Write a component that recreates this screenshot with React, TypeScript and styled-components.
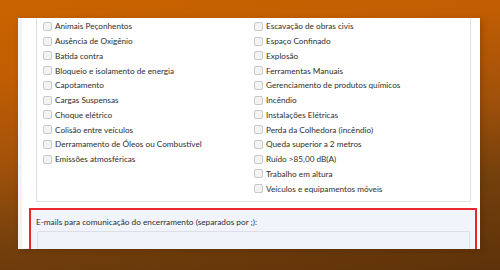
import styled, { createGlobalStyle } from "styled-components";

const leftRisks = [
    "Animais Peçonhentos",
    "Ausência de Oxigênio",
    "Batida contra",
    "Bloqueio e isolamento de energia",
    "Capotamento",
    "Cargas Suspensas",
    "Choque elétrico",
    "Colisão entre veículos",
    "Derramamento de Óleos ou Combustível",
    "Emissões atmosféricas",
];

const rightRisks = [
    "Escavação de obras civis",
    "Espaço Confinado",
    "Explosão",
    "Ferramentas Manuais",
    "Gerenciamento de produtos químicos",
    "Incêndio",
    "Instalações Elétricas",
    "Perda da Colhedora (incêndio)",
    "Queda superior a 2 metros",
    "Ruído >85,00 dB(A)",
    "Trabalho em altura",
    "Veículos e equipamentos móveis",
];

function RiskColumn({ items }: { items: string[] }) {
    return <Column>
        {items.map((label) => (
            <Item key={label}>
                <Check type="checkbox" />
                <span>{label}</span>
            </Item>
        ))}
    </Column>;
}

function App() {
    return <>
        <Global />
        <Stage>
            <Panel>
                <SideStrip>
                    <Chevron>›</Chevron>
                </SideStrip>
                <Content>
                    <RiskBox>
                        <RiskColumn items={leftRisks} />
                        <RiskColumn items={rightRisks} />
                    </RiskBox>
                    <EmailField>
                        <Label>E-mails para comunicação do encerramento (separados por ;):</Label>
                        <EmailInput />
                    </EmailField>
                </Content>
            </Panel>
        </Stage>
    </>;
}

const Global = createGlobalStyle`
    body {
        margin: 0;
        font-family: Lato, "Open Sans", sans-serif;
    }
`;

const Stage = styled.div`
    width: 500px;
    height: 270px;
    box-sizing: border-box;
    padding: 18px 0 0 18px;
    overflow: hidden;
    background: linear-gradient(172deg, #c96300 0%, #c25e02 22%, #a3520a 48%, #74400c 72%, #5e3209 100%);
`;

const Panel = styled.div`
    display: flex;
    width: 462px;
    height: 231px;
    overflow: hidden;
    background: #fff;
    box-shadow: 2px 2px 6px rgba(60, 25, 0, 0.25);
`;

const SideStrip = styled.div`
    position: relative;
    flex: 0 0 4px;
    background: #f3f3f5;
`;

const Chevron = styled.span`
    position: absolute;
    top: 143px;
    left: 0;
    font-size: 9px;
    color: #e2e2e6;
`;

const Content = styled.div`
    flex: 1;
    display: flex;
    flex-direction: column;
    padding: 0 9px 0 14px;
`;

const RiskBox = styled.div`
    display: grid;
    grid-template-columns: 211px 1fr;
    padding: 1px 0 7px 6px;
    border: 1px solid #dfe0e6;
    border-top: none;
    height: 184px;
    box-sizing: border-box;
`;

const Column = styled.div`
    display: flex;
    flex-direction: column;
`;

const Item = styled.label`
    display: flex;
    align-items: center;
    gap: 3px;
    height: 14.75px;
    font-size: 8.2px;
    color: #2e2e2e;
    white-space: nowrap;
`;

const Check = styled.input`
    appearance: none;
    margin: 0;
    width: 9px;
    height: 9px;
    box-sizing: border-box;
    border: 1px solid #c9c9cc;
    border-radius: 2px;
    background: #f3f3f3;
`;

const EmailField = styled.div`
    margin: 6px -6px 0 -7px;
    padding: 6px 5px 0 6px;
    border: 2px solid #e8262c;
    background: #f1f5fb;
    height: 60px;
    box-sizing: border-box;
`;

const Label = styled.div`
    font-size: 8.25px;
    color: #2e2e2e;
    line-height: 12px;
    margin-left: -1px;
`;

const EmailInput = styled.div`
    margin-top: 3px;
    height: 30px;
    border: 1px solid #dcdfe6;
    border-radius: 2px;
    background: #eff4fa;
`;

export default App;
